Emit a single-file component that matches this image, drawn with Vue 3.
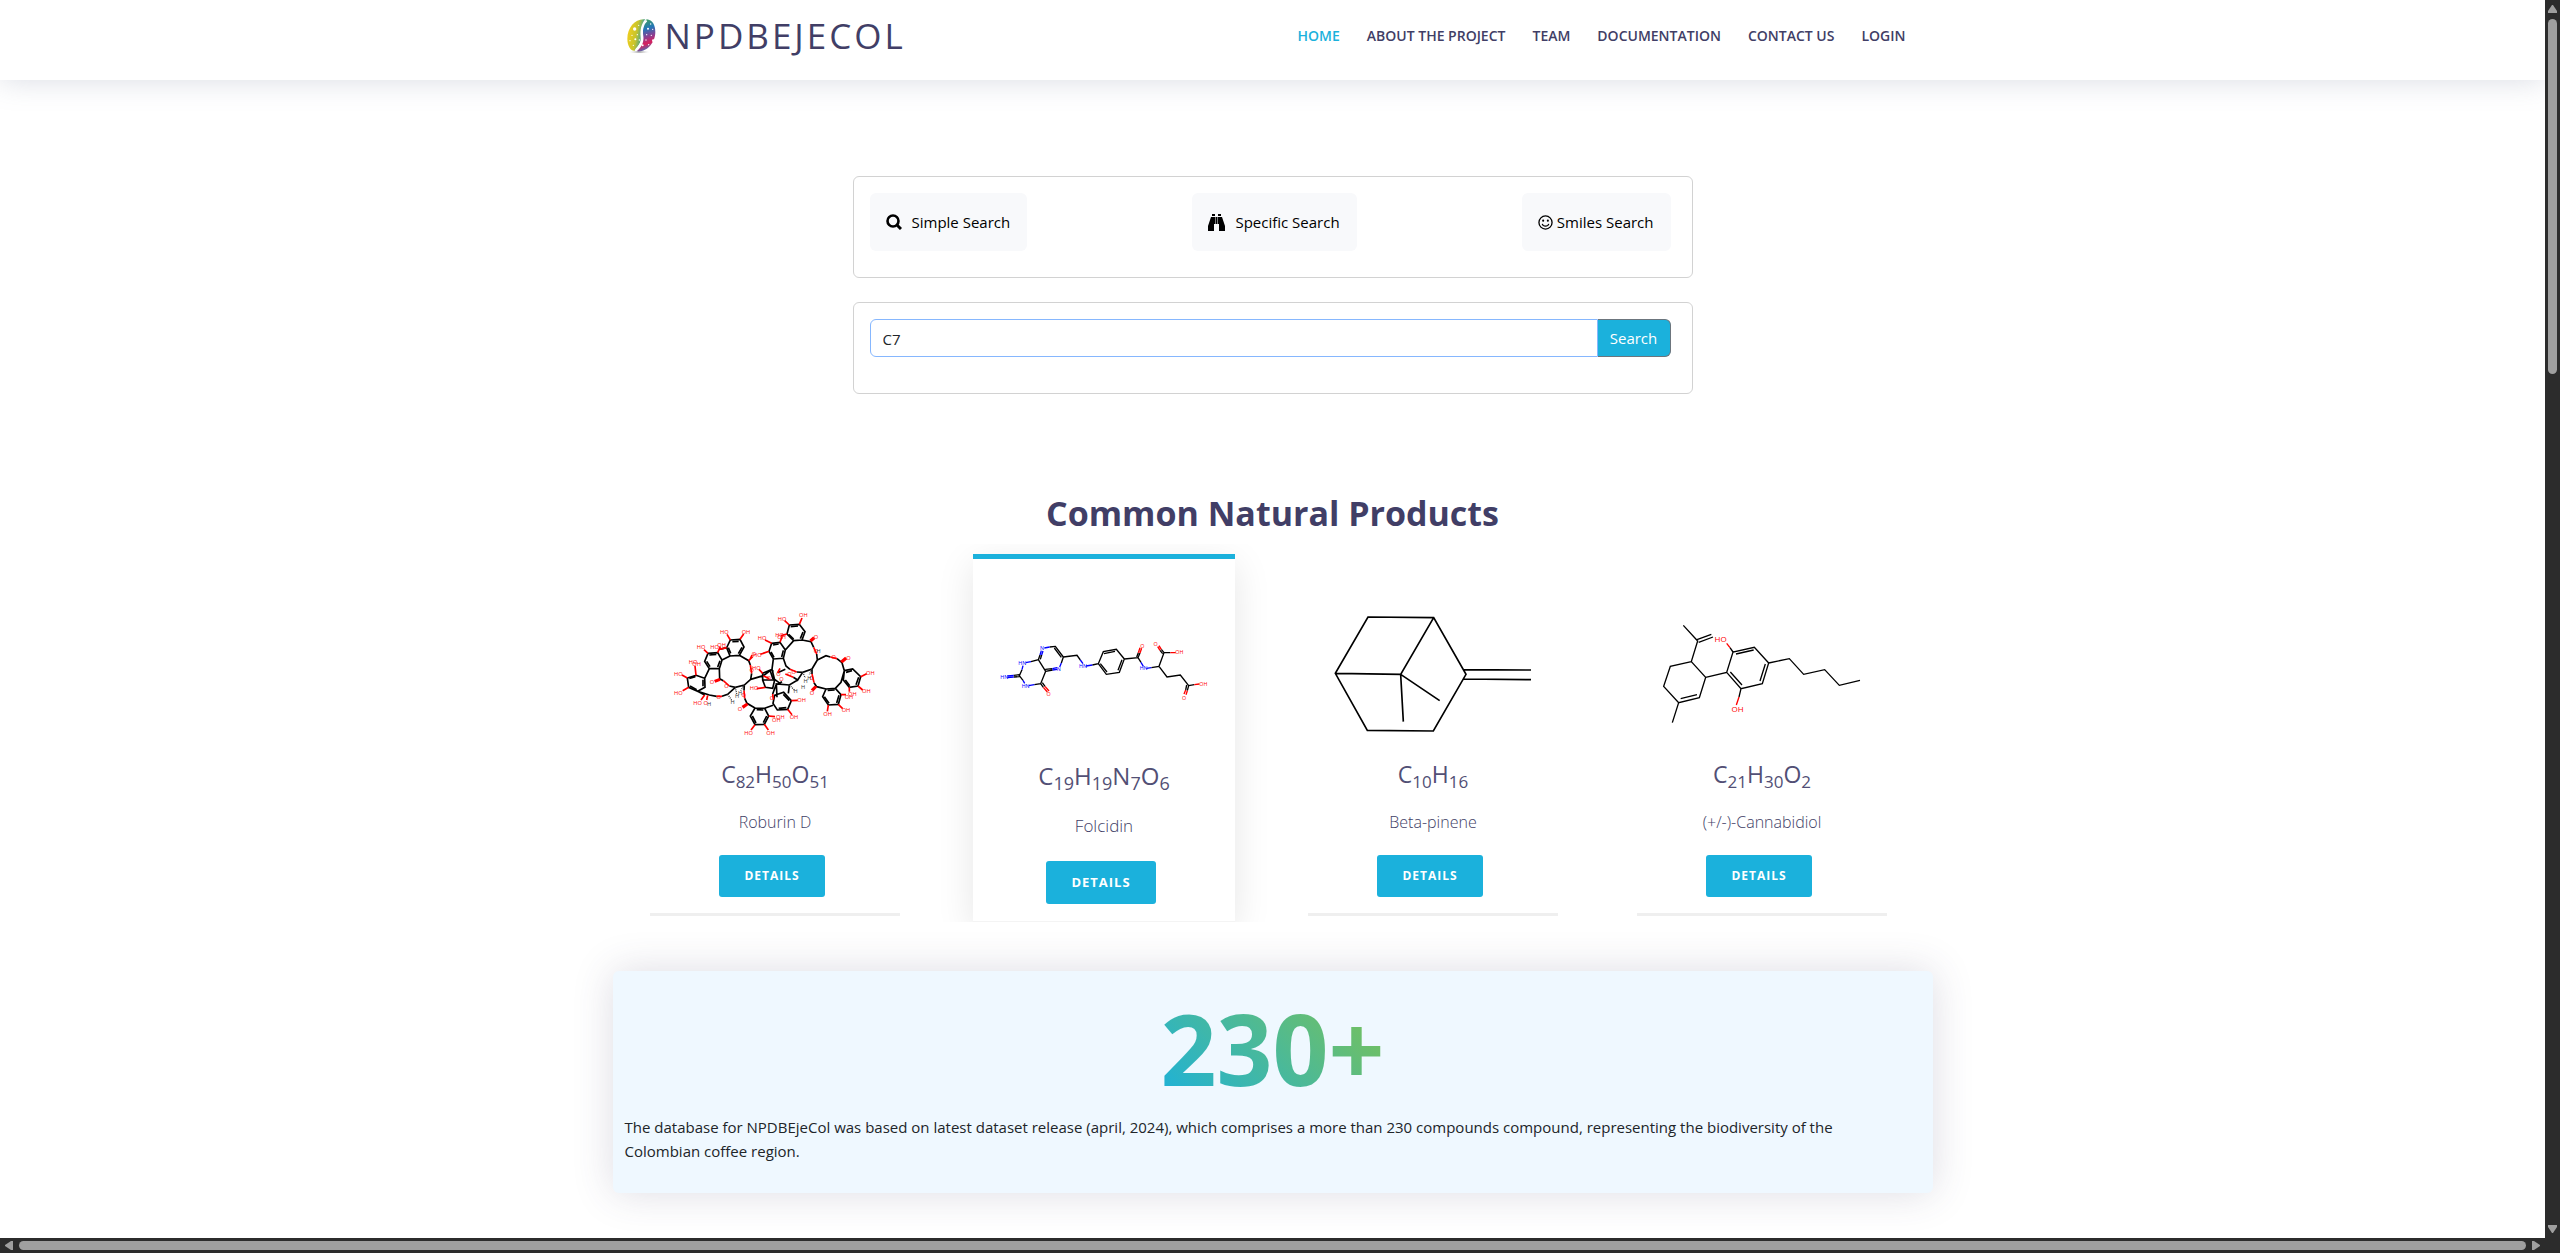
<script setup>
import { ref } from 'vue'

const query = ref('C7')

const links = ['Home', 'About the project', 'Team', 'Documentation', 'Contact us', 'Login']

// Each molecule: black / red / blue bond paths plus atom labels [text, x, y, colour].
const products = [
  {
    name: 'Roburin D',
    formula: [['C', 82], ['H', 50], ['O', 51]],
    box: '-13 30 720 450',
    width: 5,
    font: 17,
    black:
      'M213 150L242 148L254 171L240 196L212 198L202 173Z M146 190L175 188L188 210L180 236L150 236L136 214Z ' +
      'M110 256L136 265L137 292L115 304L88 292L84 264Z M287 354L316 355L328 378L315 403L287 404L273 378Z ' +
      'M346 316L373 307L396 332L385 358L354 360L341 340Z M310 250L338 238L346 270L340 295L318 292L310 270Z ' +
      'M337 160L362 157L378 180L372 205L342 207L329 184Z M390 105L420 103L437 125L428 150L403 152L383 132Z ' +
      'M555 242L580 237L604 260L596 288L570 292L552 270Z M500 297L528 295L545 314L537 343L507 345L490 320Z ' +
      'M188 210L212 198M240 196L268 212L273 225M277 250L274 268L255 285L228 292L210 288M192 272L181 266L180 236 ' +
      'M150 236L136 265M255 285L254 302M256 325L263 340L287 354M316 355L341 346M340 312L350 285L368 275M274 268L312 257L338 238L342 207 ' +
      'M378 180L403 152M428 150L455 155L463 172M472 192L474 210L458 237L430 247L412 246M392 238L380 228L372 205 ' +
      'M458 237L458 252M464 278L472 290L500 297M528 295L545 277L555 242L548 218L533 206M474 210L500 197L513 201 ' +
      'M430 247L415 270L402 262M415 270L390 285L351 282L353 322M390 285L387 310M115 304L150 315L172 319M188 319L205 313L228 292 ' +
      'M88 292L115 304L136 315M340 240L342 265L362 280M310 270L346 270M202 173L180 178M355 248L378 238',
    double:
      'M219 155L238 154M248 172L237 191M207 173L214 190M150 195L171 193M182 212L175 231M142 214L152 230M131 269L131 289M92 288L112 299M90 265L108 260' +
      'M292 359L312 360M322 378L312 398M279 378L290 399M372 313L390 332M381 353L358 355M341 165L358 162M372 181L367 201M335 186L344 202' +
      'M394 110L416 108M431 126L423 146M388 133L403 147M560 247L578 242M598 262L590 284M558 270L571 287M505 301L526 300M539 316L532 339M495 320L509 340M333 243L341 268',
    red:
      'M146 190L134 179M175 188L183 170M213 150L203 133M242 148L253 132M110 256L107 228M84 264L68 255M88 292L70 302M136 315L125 330M145 316L142 330' +
      'M268 212L280 200M272 208L278 195M181 266L165 272M183 270L167 276M273 225L277 250M192 272L210 288M172 319L188 319M254 302L256 325M263 340L248 350M266 343L251 354' +
      'M287 404L275 420M315 403L327 420M328 378L347 380M385 358L398 374M396 332L415 331M337 160L317 150M329 184L303 193M362 157L368 140M390 105L376 92M420 103L428 84M383 132L365 137' +
      'M455 155L466 145M452 151L463 141M463 172L472 192M392 238L412 246M458 252L464 278M472 290L460 303M468 288L456 300M548 218L562 206M544 215L559 202M533 206L513 201' +
      'M604 260L622 251M596 288L610 300M570 292L570 305M545 314L560 314M537 343L550 356M507 345L504 364M318 292L292 296M310 250L299 238M355 248L362 235M402 262L378 252M312 257L330 266M340 312L342 328M180 178L202 173',
    blue: '',
    dash: 'M228 292L232 312M205 313L218 332M255 285L244 302M390 285L405 300M430 247L438 264M458 237L450 254',
    atoms: [
      ['HO', 195, 131, 'r'], ['OH', 260, 131, 'r'], ['HO', 125, 176, 'r'], ['HO', 166, 176, 'r'], ['OH', 187, 170, 'r'], ['HO', 101, 223, 'r'], ['OH', 112, 229, 'r'],
      ['HO', 57, 257, 'r'], ['HO', 57, 314, 'r'], ['HO', 115, 344, 'r'], ['O', 139, 344, 'r'], ['H', 149, 348, 'k'], ['O', 158, 281, 'r'], ['O', 201, 293, 'r'],
      ['O', 178, 328, 'r'], ['O', 284, 199, 'r'], ['O', 277, 246, 'r'], ['O', 253, 322, 'r'], ['O', 242, 363, 'r'], ['HO', 268, 434, 'r'], ['OH', 334, 434, 'r'],
      ['OH', 351, 395, 'r'], ['OH', 363, 387, 'r'], ['OH', 404, 388, 'r'], ['OH', 427, 337, 'r'], ['O', 338, 331, 'r'], ['HO', 284, 301, 'r'], ['HO', 291, 239, 'r'],
      ['O', 328, 270, 'r'], ['O', 357, 258, 'r'], ['O', 366, 274, 'r'], ['O', 390, 258, 'r'], ['O', 403, 252, 'r'], ['HO', 308, 151, 'r'], ['HO', 294, 202, 'r'],
      ['HO', 361, 142, 'r'], ['OH', 367, 148, 'r'], ['HO', 368, 94, 'r'], ['OH', 432, 82, 'r'], ['O', 470, 146, 'r'], ['O', 470, 190, 'r'], ['H', 478, 190, 'k'],
      ['O', 523, 208, 'r'], ['O', 567, 210, 'r'], ['O', 457, 270, 'r'], ['O', 458, 315, 'r'], ['OH', 633, 255, 'r'], ['OH', 621, 308, 'r'], ['OH', 579, 318, 'r'],
      ['OH', 569, 326, 'r'], ['OH', 560, 367, 'r'], ['OH', 505, 377, 'r'], ['H', 220, 342, 'k'], ['H', 233, 325, 'k'], ['H', 242, 315, 'k'], ['H', 409, 309, 'k'],
      ['H', 431, 298, 'k'], ['H', 439, 279, 'k'], ['H', 450, 269, 'k'],
    ],
  },
  {
    name: 'Folcidin',
    featured: true,
    formula: [['C', 19], ['H', 19], ['N', 7], ['O', 6]],
    box: '12 180 720 450',
    width: 4,
    font: 16,
    black:
      'M209 321L226 319L250 351L244 369M226 319L250 351M223 324L244 352M250 351L291 346L301 360M180 345L175 359L153 365M175 359L197 394L182 431L163 434M181 358L185 345' +
      'M197 394L218 390M196 388L217 386M197 394L175 359M126 389L118 407L129 421M118 404L101 406M119 410L101 411M182 431L190 442M187 428L195 439' +
      'M337 375L355 371L370 335L409 328L433 357L418 397L379 403L355 371M372 341L405 334M426 359L414 391M381 396L361 371' +
      'M433 357L474 353L480 339M470 351L475 338M474 353L483 367M514 383L537 379L552 338L544 328M548 341L540 331M552 338L571 338M537 379L561 411L601 405L626 437L622 452M620 435L617 450M626 437L643 434',
    double: '',
    red:
      'M480 339L485 325M475 338L480 323M544 328L537 317M540 331L533 320M571 338L587 338M622 452L618 464M617 450L612 462M643 434L658 432M190 442L202 456M195 439L207 453',
    blue:
      'M209 321L193 324M180 345L184 332M185 345L189 333M153 365L137 368M126 389L129 377M129 421L134 430M163 434L146 437M101 406L82 408M101 411L82 413M218 390L232 388M217 386L231 383M244 369L239 381M301 360L309 371M337 375L318 378M483 367L490 379M514 383L499 385',
    dash: '',
    atoms: [
      ['N', 186, 331, 'b'], ['HN', 127, 374, 'b'], ['HN', 73, 418, 'b'], ['HN', 137, 443, 'b'], ['N', 236, 393, 'b'], ['O', 206, 468, 'r'], ['HN', 309, 383, 'b'],
      ['O', 487, 323, 'r'], ['HN', 491, 391, 'b'], ['O', 527, 319, 'r'], ['OH', 598, 343, 'r'], ['OH', 670, 437, 'r'], ['O', 612, 479, 'r'],
    ],
  },
  {
    name: 'Beta-pinene',
    formula: [['C', 10], ['H', 16]],
    box: '9 30 720 450',
    width: 5,
    font: 16,
    black:
      'M174 81L371 83L468 253L370 423L172 421L76 250Z M371 83L272 253L76 250M272 253L280 395M272 253L389 332M461 239L663 240M461 267L663 269',
    double: '',
    red: '',
    blue: '',
    dash: '',
    atoms: [],
  },
  {
    name: '(+/-)-Cannabidiol',
    formula: [['C', 21], ['H', 30], ['O', 2]],
    box: '6 30 720 450',
    width: 4,
    font: 24,
    black:
      'M130 106L173 153L154 215L197 262L178 323L116 338L71 289L91 229L154 215M116 338L97 398M122 326L171 314M171 149L214 133M176 157L219 141' +
      'M197 262L260 247L279 186L343 172L386 219L367 281L303 296L260 247M288 192L341 180M376 222L360 273M306 285L271 246M279 186L270 173M303 296L297 321' +
      'M386 219L448 206L491 253L554 239L598 286L660 271',
    double: '',
    red: 'M270 173L260 160M297 321L289 345',
    blue: '',
    dash: '',
    atoms: [['HO', 242, 157, 'r'], ['OH', 293, 365, 'r']],
  },
]

const inks = { r: '#ff0000', b: '#0000ff', k: '#333' }
</script>

<template>
  <div class="window">
    <div class="page">
      <header class="header">
        <div class="container bar">
          <a class="brand" href="#">
            <svg class="bean" viewBox="0 0 90 108" aria-hidden="true">
              <defs>
                <linearGradient id="bean-l" x1="0" y1="0.3" x2="1" y2="0.6">
                  <stop offset="0" stop-color="#f3cf1d" />
                  <stop offset="0.5" stop-color="#c8c42c" />
                  <stop offset="0.8" stop-color="#4fa68a" />
                  <stop offset="1" stop-color="#2b8fd0" />
                </linearGradient>
                <linearGradient id="bean-r" x1="0.4" y1="0" x2="0.6" y2="1">
                  <stop offset="0" stop-color="#3fa05a" />
                  <stop offset="0.3" stop-color="#2377b8" />
                  <stop offset="0.55" stop-color="#8a3f92" />
                  <stop offset="0.75" stop-color="#d91f5c" />
                  <stop offset="1" stop-color="#2a7fc8" />
                </linearGradient>
                <radialGradient id="bean-s">
                  <stop offset="0" stop-color="#777" />
                  <stop offset="1" stop-color="#fff" stop-opacity="0" />
                </radialGradient>
              </defs>
              <ellipse cx="40" cy="102" rx="34" ry="5" fill="url(#bean-s)" />
              <path d="M58 4C30 0 4 26 4 62C4 86 16 100 26 98C36 84 46 76 44 58C42 34 46 18 58 4Z" fill="url(#bean-l)" />
              <path d="M62 4C50 20 50 40 52 58C54 76 44 90 32 100C62 104 88 74 88 42C88 22 80 6 62 4Z" fill="url(#bean-r)" />
              <path d="M62 8C42 26 50 46 49 62C47 78 38 86 29 96" fill="none" stroke="#fff" stroke-width="5" />
              <g fill="#fff">
                <circle cx="26" cy="33" r="5" /><circle cx="38" cy="22" r="2" /><circle cx="18" cy="52" r="2" />
                <circle cx="34" cy="50" r="2" /><circle cx="28" cy="64" r="3" /><circle cx="12" cy="68" r="2" />
                <circle cx="40" cy="66" r="2" /><circle cx="22" cy="82" r="2" /><circle cx="66" cy="32" r="3" />
                <circle cx="80" cy="34" r="2" /><circle cx="62" cy="50" r="2" /><circle cx="76" cy="52" r="2" />
                <circle cx="82" cy="68" r="4" /><circle cx="60" cy="66" r="2" /><circle cx="68" cy="80" r="2" />
                <circle cx="50" cy="82" r="3" /><circle cx="74" cy="18" r="2" />
              </g>
            </svg>
            <span>NPDBEJECOL</span>
          </a>
          <nav class="nav" aria-label="Main">
            <a v-for="(link, i) in links" :key="link" href="#" :class="{ active: i === 0 }">{{ link }}</a>
          </nav>
        </div>
      </header>

      <main class="container main">
        <section class="search">
          <div class="card modes">
            <button type="button" class="mode">
              <svg width="16" height="16" viewBox="0 0 16 16" aria-hidden="true">
                <circle cx="7" cy="7" r="5.5" fill="none" stroke="#000" stroke-width="2.6" />
                <path d="M10.5 10.5L15 15" stroke="#000" stroke-width="3" />
              </svg>
              Simple Search
            </button>
            <button type="button" class="mode">
              <svg width="17" height="17" viewBox="0 0 17 17" aria-hidden="true">
                <path d="M4 0H7V2H4ZM10 0H13V2H10ZM3 3H7V10H6V17H0V12ZM10 3H14L17 12V17H11V10H10ZM7.5 3H9.5V10H7.5Z" />
              </svg>
              Specific Search
            </button>
            <button type="button" class="mode smiles">
              <svg width="15" height="15" viewBox="0 0 16 16" aria-hidden="true">
                <circle cx="8" cy="8" r="7" fill="none" stroke="#000" stroke-width="1.4" />
                <circle cx="5.5" cy="6" r="1.1" />
                <circle cx="10.5" cy="6" r="1.1" />
                <path d="M4.5 9.5C5.5 12.8 10.5 12.8 11.5 9.5" fill="none" stroke="#000" stroke-width="1.3" />
              </svg>
              Smiles Search
            </button>
          </div>
          <form class="card query" @submit.prevent>
            <input v-model="query" type="text" aria-label="Search term" />
            <button type="submit">Search</button>
          </form>
        </section>

        <h2>Common Natural Products</h2>

        <section class="products">
          <article v-for="p in products" :key="p.name" class="product" :class="{ featured: p.featured }">
            <svg class="molecule" :viewBox="p.box" fill="none" :stroke-width="p.width" role="img" :aria-label="p.name">
              <path :d="p.black" stroke="#000" />
              <path v-if="p.double" :d="p.double" stroke="#000" />
              <path v-if="p.dash" :d="p.dash" stroke="#333" stroke-width="4" stroke-dasharray="3 3" />
              <path v-if="p.red" :d="p.red" stroke="#ff0000" />
              <path v-if="p.blue" :d="p.blue" stroke="#0000ff" />
              <text
                v-for="(a, i) in p.atoms"
                :key="i"
                :x="a[1]"
                :y="a[2]"
                :fill="inks[a[3]]"
                :font-size="p.font"
                text-anchor="middle"
                stroke="none"
              >{{ a[0] }}</text>
            </svg>
            <h3><template v-for="(f, i) in p.formula" :key="i">{{ f[0] }}<sub>{{ f[1] }}</sub></template></h3>
            <p>{{ p.name }}</p>
            <a class="details" href="#">Details</a>
          </article>
        </section>

        <section class="stats">
          <div class="count">230+</div>
          <p>
            The database for NPDBEjeCol was based on latest dataset release (april, 2024), which comprises a more than
            230 compounds compound, representing the biodiversity of the Colombian coffee region.
          </p>
        </section>
      </main>
    </div>

    <div class="track vertical" aria-hidden="true">
      <svg width="9" height="8" viewBox="0 0 9 8"><path d="M4 0H5L9 6V8H0V6Z" /></svg>
      <i class="thumb"></i>
      <i class="rest"></i>
      <svg width="9" height="8" viewBox="0 0 9 8"><path d="M4 8H5L9 2V0H0V2Z" /></svg>
    </div>
    <div class="track horizontal" aria-hidden="true">
      <svg width="8" height="9" viewBox="0 0 8 9"><path d="M0 4V5L6 9H8V0H6Z" /></svg>
      <i class="thumb"></i>
      <svg width="8" height="9" viewBox="0 0 8 9"><path d="M8 4V5L2 9H0V0H2Z" /></svg>
    </div>
    <div class="corner"></div>
  </div>
</template>

<style>
body {
  margin: 0;
  background: #fff;
}
</style>

<style scoped>
.window {
  display: grid;
  grid-template-columns: minmax(0, 1fr) 15px;
  grid-template-rows: 1fr 15px;
  min-height: 100vh;
  font: 15px/24px 'Open Sans', 'Noto Sans', sans-serif;
  color: #212529;
}
.window *,
.window {
  box-sizing: border-box;
}
a {
  text-decoration: none;
}
button,
input {
  font: inherit;
}
.page {
  overflow: hidden;
  background: #fff;
}
.container {
  max-width: 1320px;
  margin: 0 auto;
}

.header {
  box-shadow: 0 0 30px rgba(127, 137, 161, 0.3);
}
.bar {
  display: flex;
  align-items: center;
  justify-content: space-between;
  height: 80px;
  padding: 0 27px 9px 13px;
}
.brand {
  display: flex;
  align-items: center;
  gap: 9px;
  font-size: 35px;
  line-height: 48px;
  letter-spacing: 3px;
  color: #413e66;
}
.bean {
  width: 30px;
  height: 36px;
}
.nav {
  display: flex;
  gap: 27px;
  font-size: 14px;
  font-weight: 600;
  line-height: 20px;
  text-transform: uppercase;
}
.nav a {
  color: #413e66;
}
.nav .active {
  color: #1bb1dc;
}

.main {
  padding: 96px 0 45px;
}
.search {
  display: flex;
  flex-direction: column;
  gap: 24px;
  max-width: 840px;
  margin: 0 auto;
}
.card {
  display: flex;
  border: 1px solid #d2d2d2;
  border-radius: 6px;
}
.modes {
  justify-content: space-between;
  padding: 16px 21px 26px 16px;
}
.mode {
  display: flex;
  align-items: center;
  gap: 10px;
  height: 58px;
  padding: 0 17px 0 16px;
  border: 0;
  border-radius: 6px;
  background: #f8f9fb;
  color: #000;
}
.smiles {
  gap: 4px;
}
.query {
  padding: 16px 21px 36px 16px;
}
.query input {
  flex: 1;
  min-width: 0;
  height: 38px;
  padding: 2px 12px 0;
  border: 1px solid #86b7fe;
  border-radius: 6px 0 0 6px;
  background: #fff;
  color: #212529;
  outline: 0;
}
.query button {
  width: 73px;
  padding: 0;
  border: 1px solid #6c757d;
  border-left: 0;
  border-radius: 0 6px 6px 0;
  background: #1bb1dc;
  color: #fff;
}

h2 {
  margin: 99px 0 21px;
  text-align: center;
  font-size: 34px;
  font-weight: 700;
  line-height: 40px;
  color: #413e66;
}

.products {
  display: grid;
  grid-template-columns: repeat(4, 1fr);
  justify-items: center;
  align-items: start;
  margin: 0 6px 0 -2px;
}
.product {
  display: flex;
  flex-direction: column;
  align-items: center;
  width: 250px;
  margin-top: 9px;
  padding: 37px 0 16px;
  border-bottom: 3px solid #efefef;
  color: #524f75;
}
.molecule {
  width: 240px;
  height: 150px;
  font-family: 'Open Sans', sans-serif;
}
h3 {
  margin: 10px 0 22px;
  font-size: 23px;
  font-weight: 400;
  line-height: 28px;
}
sub {
  font-size: 17px;
  line-height: 0;
  vertical-align: -5px;
}
.product p {
  margin: 0;
  font-size: 16px;
  font-weight: 300;
  color: #413e66;
}
.details {
  width: 106px;
  margin: 21px 6px 0 0;
  border-radius: 3px;
  background: #1bb1dc;
  text-align: center;
  text-transform: uppercase;
  font-size: 12px;
  font-weight: 700;
  line-height: 42px;
  letter-spacing: 1px;
  color: #fff;
}
.featured {
  width: 262px;
  margin-top: 0;
  padding: 41px 0 17px;
  border-top: 5px solid #1bb1dc;
  border-bottom: 1px solid #f4f4f4;
  background: #fff;
  box-shadow: 0 10px 35px rgba(0, 0, 0, 0.1);
  clip-path: inset(-10px -40px 0 -40px);
}
.featured h3 {
  margin: 12px 0 24px;
  font-size: 24px;
}
.featured sub {
  font-size: 18px;
}
.product.featured p {
  font-size: 17px;
}
.featured .details {
  width: 110px;
  margin-top: 23px;
  font-size: 13px;
  line-height: 43px;
}

.stats {
  margin-top: 49px;
  padding: 21px 12px 30px;
  border-radius: 6px;
  background: #eff8ff;
  box-shadow: 0 0 40px rgba(65, 62, 102, 0.18);
}
.count {
  width: fit-content;
  margin: 0 auto;
  background: linear-gradient(45deg, #1bb1dc, #7fc24f);
  background-clip: text;
  -webkit-background-clip: text;
  color: transparent;
  font-size: 98px;
  font-weight: 700;
  line-height: 112px;
}
.stats p {
  margin: 11px 0 0;
  padding-right: 32px;
}

.track {
  display: flex;
  align-items: center;
  gap: 6px;
  padding: 5px 3px;
  background: #2c2c2c;
}
.track svg {
  flex: none;
  fill: #9f9f9f;
}
.vertical {
  flex-direction: column;
}
.horizontal {
  padding: 3px 5px;
}
.thumb {
  border-radius: 5px;
  background: #9f9f9f;
}
.vertical .thumb {
  flex: 355;
  width: 9px;
}
.vertical .rest {
  flex: 840;
}
.horizontal .thumb {
  flex: 1;
  height: 9px;
}
.corner {
  background: #2c2c2c;
}
</style>
